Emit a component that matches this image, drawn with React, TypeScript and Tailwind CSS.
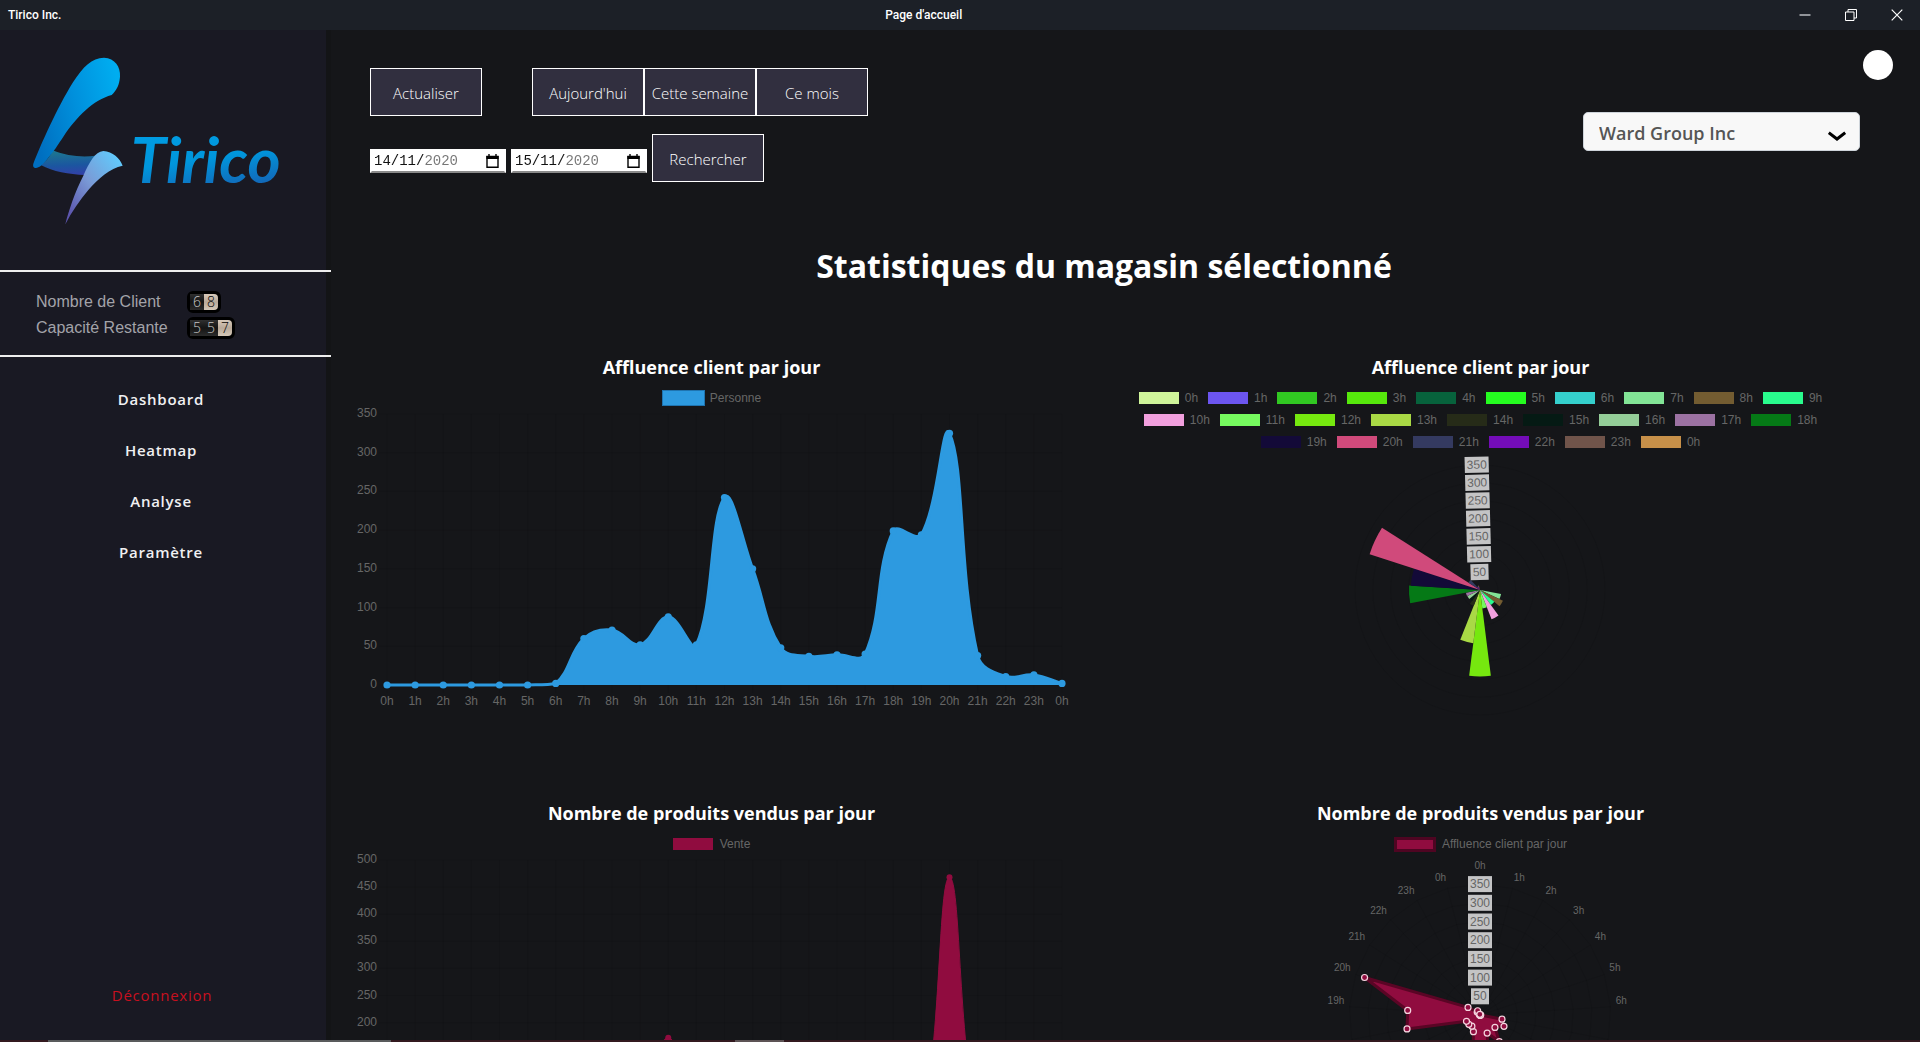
type Point = { x: number; y: number };

const HOURS = [...Array.from({ length: 24 }, (_, i) => `${i}h`), "0h"];

const VISITORS = [0, 0, 0, 0, 0, 0, 2, 60, 71, 52, 88, 52, 242, 150, 48, 37, 39, 40, 199, 194, 325, 38, 11, 13, 2];
const SALES = [0, 0, 0, 0, 0, 0, 0, 0, 20, 60, 172, 60, 90, 60, 20, 10, 10, 20, 30, 10, 468, 10, 0, 0, 0];

const WEDGE_COLORS = [
  "#cff59a", "#6c55f0", "#31c822", "#56e80c", "#07623c", "#25fc20", "#35d0cd", "#82e496", "#735c31", "#29fb8d",
  "#f2a0de", "#76f95f", "#76e80f", "#a9d945", "#262b18", "#051a14", "#94cd98", "#9c72a2", "#057916",
  "#130a38", "#d04a7b", "#343a60", "#740cb8", "#70544a", "#c79049",
];

const LEGEND_ROWS = [
  [0, 10],
  [10, 19],
  [19, 25],
];

function splinePath(points: Point[], top: number, bottom: number, tension = 0.4) {
  const clamp = (v: number) => Math.min(bottom, Math.max(top, v));
  const controls = points.map((p, i) => {
    const prev = points[i - 1] ?? p;
    const next = points[i + 1] ?? p;
    const d01 = Math.hypot(p.x - prev.x, p.y - prev.y);
    const d12 = Math.hypot(next.x - p.x, next.y - p.y);
    const total = d01 + d12 || 1;
    const fa = (tension * d01) / total;
    const fb = (tension * d12) / total;
    return {
      before: { x: p.x - fa * (next.x - prev.x), y: clamp(p.y - fa * (next.y - prev.y)) },
      after: { x: p.x + fb * (next.x - prev.x), y: clamp(p.y + fb * (next.y - prev.y)) },
    };
  });
  let d = `M${points[0].x},${points[0].y}`;
  for (let i = 1; i < points.length; i++) {
    const a = controls[i - 1].after;
    const b = controls[i].before;
    d += ` C${a.x},${a.y} ${b.x},${b.y} ${points[i].x},${points[i].y}`;
  }
  return d;
}

function AreaChart({
  values,
  max,
  top,
  bottom,
  color,
  stroke,
  pointRadius,
  label,
}: {
  values: number[];
  max: number;
  top: number;
  bottom: number;
  color: string;
  stroke: number;
  pointRadius: number;
  label: string;
}) {
  const left = 56;
  const right = 731;
  const step = (right - left) / (values.length - 1);
  const points = values.map((v, i) => ({ x: left + i * step, y: bottom - (v / max) * (bottom - top) }));
  const line = splinePath(points, top, bottom);
  const ticks = Array.from({ length: max / 50 + 1 }, (_, i) => i * 50);
  return (
    <svg viewBox={`0 0 761 ${bottom + 32}`} className="block w-full" role="img" aria-label={label}>
      <g stroke="#000" strokeOpacity="0.08">
        {ticks.map((t) => {
          const y = bottom - (t / max) * (bottom - top);
          return <line key={t} x1={left - 8} x2={right} y1={y} y2={y} />;
        })}
        {points.map((p, i) => (
          <line key={i} x1={p.x} x2={p.x} y1={top} y2={bottom + 8} />
        ))}
      </g>
      <path d={`${line} L${right},${bottom} L${left},${bottom} Z`} fill={color} />
      <path d={line} fill="none" stroke={color} strokeWidth={stroke} />
      {points.map((p, i) => (
        <circle key={i} cx={p.x} cy={p.y} r={pointRadius} fill={color} />
      ))}
      <g fill="#666" fontSize="12" fontFamily="'Liberation Sans', Arial, sans-serif">
        {ticks.map((t) => (
          <text key={t} x={left - 10} y={bottom - (t / max) * (bottom - top) + 3} textAnchor="end">
            {t}
          </text>
        ))}
        {points.map((p, i) => (
          <text key={i} x={p.x} y={bottom + 20} textAnchor="middle">
            {HOURS[i]}
          </text>
        ))}
      </g>
    </svg>
  );
}

const SECTOR = (2 * Math.PI) / 25;

function polar(cx: number, cy: number, r: number, angle: number): Point {
  return { x: cx + r * Math.sin(angle), y: cy - r * Math.cos(angle) };
}

function ScaleLabels({ cx, cy, step }: { cx: number; cy: number; step: number }) {
  return (
    <g fontSize="12" fontFamily="'Liberation Sans', Arial, sans-serif" textAnchor="middle">
      {[50, 100, 150, 200, 250, 300, 350].map((t, i) => {
        const y = cy - step * (i + 1);
        const w = t < 100 ? 18 : 24;
        return (
          <g key={t}>
            <rect x={cx - w / 2} y={y - 8} width={w} height="16" fill="#fff" fillOpacity="0.75" />
            <text x={cx} y={y + 4} fill="#666">
              {t}
            </text>
          </g>
        );
      })}
    </g>
  );
}

function PolarChart() {
  const cx = 380;
  const cy = 137;
  const unit = 125 / 350;
  return (
    <svg viewBox="0 0 761 280" className="block w-full" role="img" aria-label="Affluence client par heure">
      <g fill="none" stroke="#000" strokeOpacity="0.08">
        {[1, 2, 3, 4, 5, 6, 7].map((i) => (
          <circle key={i} cx={cx} cy={cy} r={i * 50 * unit} />
        ))}
      </g>
      {VISITORS.map((v, i) => {
        const r = v * unit;
        const a = polar(cx, cy, r, i * SECTOR);
        const b = polar(cx, cy, r, (i + 1) * SECTOR);
        return v > 0 ? (
          <path key={i} d={`M${cx},${cy} L${a.x},${a.y} A${r},${r} 0 0 1 ${b.x},${b.y} Z`} fill={WEDGE_COLORS[i]} />
        ) : null;
      })}
      <g transform={`rotate(-1.5 ${cx} ${cy})`}>
        <ScaleLabels cx={cx} cy={cy} step={17.9} />
      </g>
    </svg>
  );
}

function RadarChart() {
  const cx = 380;
  const cy = 163;
  const unit = 130.7 / 350;
  const points = VISITORS.map((v, i) => polar(cx, cy, v * unit, i * SECTOR));
  const outline = points.map((p) => `${p.x},${p.y}`).join(" ");
  return (
    <svg viewBox="0 0 761 320" className="block w-full" role="img" aria-label="Produits vendus par heure">
      <g fill="none" stroke="#000" strokeOpacity="0.08">
        {[1, 2, 3, 4, 5, 6, 7].map((ring) => (
          <polygon
            key={ring}
            points={HOURS.map((_, i) => {
              const p = polar(cx, cy, ring * 50 * unit, i * SECTOR);
              return `${p.x},${p.y}`;
            }).join(" ")}
          />
        ))}
        {HOURS.map((_, i) => {
          const p = polar(cx, cy, 350 * unit, i * SECTOR);
          return <line key={i} x1={cx} y1={cy} x2={p.x} y2={p.y} />;
        })}
      </g>
      <polygon points={outline} fill="#900c3f" stroke="#5a0525" strokeWidth="3" strokeLinejoin="round" />
      {points.map((p, i) => (
        <circle key={i} cx={p.x} cy={p.y} r="3" fill="#900c3f" stroke="#f5d5e0" strokeWidth="1.2" />
      ))}
      <ScaleLabels cx={cx} cy={cy} step={18.7} />
      <g fill="#666" fontSize="10" fontFamily="'Liberation Sans', Arial, sans-serif">
        {HOURS.map((h, i) => {
          const p = polar(cx, cy, 136, i * SECTOR);
          const anchor = i === 0 ? "middle" : i <= 12 ? "start" : "end";
          const lift = i === 0 ? 10 : p.y > cy ? -10 : 2;
          return (
            <text key={i} x={p.x} y={p.y - lift} textAnchor={anchor}>
              {h}
            </text>
          );
        })}
      </g>
    </svg>
  );
}

function Logo() {
  return (
    <svg viewBox="0 0 840 570" className="ml-5 block w-[280px] overflow-visible" role="img" aria-label="Tirico">
      <defs>
        <linearGradient id="blade" x1="0" y1="0.6" x2="1" y2="0.3">
          <stop offset="0" stopColor="#006fc0" />
          <stop offset="0.5" stopColor="#0090dc" />
          <stop offset="1" stopColor="#00adf0" />
        </linearGradient>
        <linearGradient id="fold" x1="0.5" y1="0" x2="0.6" y2="1">
          <stop offset="0.1" stopColor="#1c7392" />
          <stop offset="0.6" stopColor="#1b56a0" />
          <stop offset="1" stopColor="#3340a8" />
        </linearGradient>
        <linearGradient id="tip" x1="0.9" y1="0.1" x2="0.1" y2="0.9">
          <stop offset="0" stopColor="#62c8fa" />
          <stop offset="0.5" stopColor="#7a9ad6" />
          <stop offset="1" stopColor="#5c55ae" />
        </linearGradient>
        <linearGradient id="word" x1="0" y1="0" x2="0.3" y2="1">
          <stop offset="0" stopColor="#009fe6" />
          <stop offset="0.6" stopColor="#0096dc" />
          <stop offset="1" stopColor="#1268b8" />
        </linearGradient>
      </defs>
      <path
        d="M98 316 C140 334 190 337 226 332 L196 390 C145 388 100 380 62 360 C80 348 90 335 98 316Z"
        fill="url(#fold)"
      />
      <path
        d="M40 356 C62 300 110 190 160 110 C190 65 215 38 252 38 C285 40 302 65 300 95 C298 120 290 135 275 150 C220 165 170 215 130 275 C115 297 106 312 98 322 C86 338 75 352 62 363 C52 371 36 372 40 356Z"
        fill="url(#blade)"
      />
      <path
        d="M250 318 C278 320 300 340 308 362 C270 370 235 400 205 435 C180 465 155 500 136 538 C145 500 165 440 190 392 C208 352 225 320 250 318Z"
        fill="url(#tip)"
      />
      <text
        x="332"
        y="415"
        fill="url(#word)"
        fontSize="190"
        fontWeight="700"
        fontStyle="italic"
        fontFamily="Lato, 'Open Sans', sans-serif"
      >
        Tirico
      </text>
    </svg>
  );
}

function Counter({ value }: { value: string }) {
  return (
    <output className="flex rounded-md border-[3px] border-black bg-black font-['Open_Sans',sans-serif] text-sm leading-4 font-light">
      {value.split("").map((digit, i) => (
        <span
          key={i}
          className={
            i === value.length - 1
              ? "w-3.5 rounded-r-sm bg-linear-to-b from-[#d8cabb] via-[#b9a999] to-[#d5c8b8] text-center text-black"
              : "w-3.5 bg-linear-to-b from-[#303030] via-[#141414] to-[#2c2c2c] text-center text-[#c4c4c4]"
          }
        >
          {digit}
        </span>
      ))}
    </output>
  );
}

function PanelButton({ children }: { children: string }) {
  return (
    <button
      type="button"
      className="h-12 w-28 border border-white bg-[#312f3f] pt-0.5 text-[15px] font-light whitespace-nowrap text-white"
    >
      {children}
    </button>
  );
}

function DateField({ label, value }: { label: string; value: string }) {
  return (
    <div className="mb-[9px] flex h-6 w-[136px] items-center border-2 border-[#8a8a8a] border-t-white border-r-white border-l-white bg-white">
      <input
        type="text"
        aria-label={label}
        defaultValue={value}
        className="w-[106px] bg-[linear-gradient(90deg,#111_52px,#757575_52px)] bg-clip-text pl-0.5 font-['Liberation_Mono',monospace] text-sm leading-5 text-transparent outline-none"
      />
      <button type="button" aria-label={`Ouvrir le calendrier : ${label}`} className="ml-2">
        <svg viewBox="0 0 13 14" className="h-3.5 w-[13px]" aria-hidden="true">
          <path d="M1 2.5h11v10.8H1z" fill="none" stroke="#000" strokeWidth="1.4" />
          <path d="M.4 2h12.2v3H.4zM2.3 0h1.4v3H2.3zM9.3 0h1.4v3H9.3z" fill="#000" />
        </svg>
      </button>
    </div>
  );
}

function ChartTitle({ children }: { children: string }) {
  return <h2 className="text-center text-lg leading-6 font-bold text-white">{children}</h2>;
}

const legendText = "font-['Liberation_Sans',Arial,sans-serif] text-xs text-[#666]";

export default function App() {
  return (
    <div className="flex h-screen flex-col overflow-hidden bg-[#151619] font-['Open_Sans','Noto_Sans',sans-serif]">
      <header className="flex h-[30px] shrink-0 items-center bg-[#1c2027] font-['Roboto',Arial,sans-serif] text-xs font-medium text-white">
        <span className="pr-1 pl-2">Tirico Inc.</span>
        <span className="flex-1 text-center">Page d'accueil</span>
        <button type="button" aria-label="Réduire" className="flex w-[46px] justify-center">
          <svg viewBox="0 0 12 12" className="size-3" aria-hidden="true">
            <path d="M.5 6h11" stroke="#b8bbc0" strokeWidth="1.5" />
          </svg>
        </button>
        <button type="button" aria-label="Restaurer" className="flex w-[46px] justify-center">
          <svg viewBox="0 0 12 12" className="size-3" fill="none" stroke="#fff" aria-hidden="true">
            <path d="M.5 3h8.5v8.5H.5zM3 3V.5h8.5V9H9" />
          </svg>
        </button>
        <button type="button" aria-label="Fermer" className="flex w-[46px] justify-center">
          <svg viewBox="0 0 12 12" className="size-3" stroke="#fff" strokeWidth="1.2" aria-hidden="true">
            <path d="M.7.7l10.6 10.6M11.3.7L.7 11.3" />
          </svg>
        </button>
      </header>

      <div className="flex min-h-0 flex-1">
        <aside className="flex w-[331px] shrink-0 flex-col bg-[linear-gradient(90deg,#191923_326px,#131416_326px)]">
          <div className="pt-[15px] pb-[35px]">
            <Logo />
          </div>
          <dl className="grid grid-cols-[151px_auto] items-center justify-start gap-y-1 border-y-2 border-[#eee] pt-[19px] pb-4 pl-9 font-['Liberation_Sans',Arial,sans-serif] text-base leading-[22px] text-[#a3a3a9]">
            <dt>Nombre de Client</dt>
            <dd className="flex">
              <Counter value="68" />
            </dd>
            <dt>Capacité Restante</dt>
            <dd className="flex">
              <Counter value="557" />
            </dd>
          </dl>
          <nav className="mt-[30px] flex w-[322px] flex-col items-center gap-[27px] text-[15px] leading-6 font-semibold tracking-wider text-[#f0f0f2]">
            <a href="#dashboard">Dashboard</a>
            <a href="#heatmap">Heatmap</a>
            <a href="#analyse">Analyse</a>
            <a href="#parametre">Paramètre</a>
          </nav>
          <a
            href="#deconnexion"
            className="mt-auto mb-[33px] w-[324px] text-center text-[15px] leading-6 tracking-wider text-[#c8101f]"
          >
            Déconnexion
          </a>
        </aside>

        <main className="min-w-0 flex-1 overflow-y-auto [scrollbar-width:none]">
          <div className="flex justify-between">
            <div className="flex flex-col gap-[18px] pt-[38px] pl-[39px]">
              <div className="flex">
                <PanelButton>Actualiser</PanelButton>
                <div className="ml-[50px] flex">
                  <PanelButton>Aujourd'hui</PanelButton>
                  <PanelButton>Cette semaine</PanelButton>
                  <PanelButton>Ce mois</PanelButton>
                </div>
              </div>
              <form className="flex items-end gap-[5px]" onSubmit={(e) => e.preventDefault()}>
                <DateField label="Date de début" value="14/11/2020" />
                <DateField label="Date de fin" value="15/11/2020" />
                <PanelButton>Rechercher</PanelButton>
              </form>
            </div>
            <div className="flex flex-col items-end pt-5">
              <button type="button" aria-label="Profil" className="mr-[27px] size-[30px] rounded-full bg-white" />
              <div className="relative mt-8 mr-[60px]">
                <select
                  aria-label="Magasin"
                  className="h-[39px] w-[277px] appearance-none rounded-[5px] border border-[#ced4da] bg-[#f8f8f8] px-[15px] pt-0.5 text-lg font-semibold text-[#555]"
                >
                  <option>Ward Group Inc</option>
                </select>
                <svg
                  viewBox="0 0 18 11"
                  className="pointer-events-none absolute top-[19px] right-[14px] h-[11px] w-[18px]"
                  aria-hidden="true"
                >
                  <path d="M.8 1.8L9 8l8.2-6.2" fill="none" stroke="#000" strokeWidth="3" />
                </svg>
              </div>
            </div>
          </div>

          <h1 className="mt-[62px] pr-[43px] text-center text-[32px] leading-[44px] font-bold text-white">
            Statistiques du magasin sélectionné
          </h1>

          <div className="mt-[67px] grid grid-cols-2 gap-x-2 pr-[59px]">
            <section className="pb-[84px]">
              <ChartTitle>Affluence client par jour</ChartTitle>
              <div className={`mt-[11px] flex h-4 items-center justify-center gap-[5px] ${legendText}`}>
                <span className="h-4 w-[43px] border border-[#1f74b0] bg-[#2d9ae0]" />
                <span>Personne</span>
              </div>
              <AreaChart
                values={VISITORS}
                max={350}
                top={8}
                bottom={279}
                color="#2d9ae0"
                stroke={3}
                pointRadius={3.6}
                label="Affluence client par heure"
              />
            </section>
            <section>
              <ChartTitle>Affluence client par jour</ChartTitle>
              <div className={`mt-2 flex flex-col ${legendText}`}>
                {LEGEND_ROWS.map(([from, to]) => (
                  <div key={from} className="flex h-[22px] items-center justify-center gap-[10px]">
                    {HOURS.slice(from, to).map((h, i) => (
                      <span key={i} className="flex items-center gap-1.5">
                        <span className="h-3 w-10" style={{ backgroundColor: WEDGE_COLORS[from + i] }} />
                        <span>{h}</span>
                      </span>
                    ))}
                  </div>
                ))}
              </div>
              <PolarChart />
            </section>
            <section>
              <ChartTitle>Nombre de produits vendus par jour</ChartTitle>
              <div className={`mt-[11px] flex h-4 items-center justify-center gap-[7px] ${legendText}`}>
                <span className="h-3 w-10 bg-[#900c3f]" />
                <span>Vente</span>
              </div>
              <AreaChart
                values={SALES}
                max={500}
                top={8}
                bottom={279}
                color="#900c3f"
                stroke={1}
                pointRadius={3}
                label="Ventes par heure"
              />
            </section>
            <section>
              <ChartTitle>Nombre de produits vendus par jour</ChartTitle>
              <div className={`mt-[11px] flex h-4 items-center justify-center gap-1.5 ${legendText}`}>
                <span className="h-[15px] w-[42px] border-[3px] border-[#4f0522] bg-[#900c3f]" />
                <span>Affluence client par jour</span>
              </div>
              <RadarChart />
            </section>
          </div>
        </main>
      </div>

      <div className="flex h-0.5 shrink-0 bg-[#33191f]">
        <span className="ml-12 w-[343px] bg-[#595b5c]" />
        <span className="ml-[344px] w-[49px] bg-[#5d5355]" />
      </div>
    </div>
  );
}
